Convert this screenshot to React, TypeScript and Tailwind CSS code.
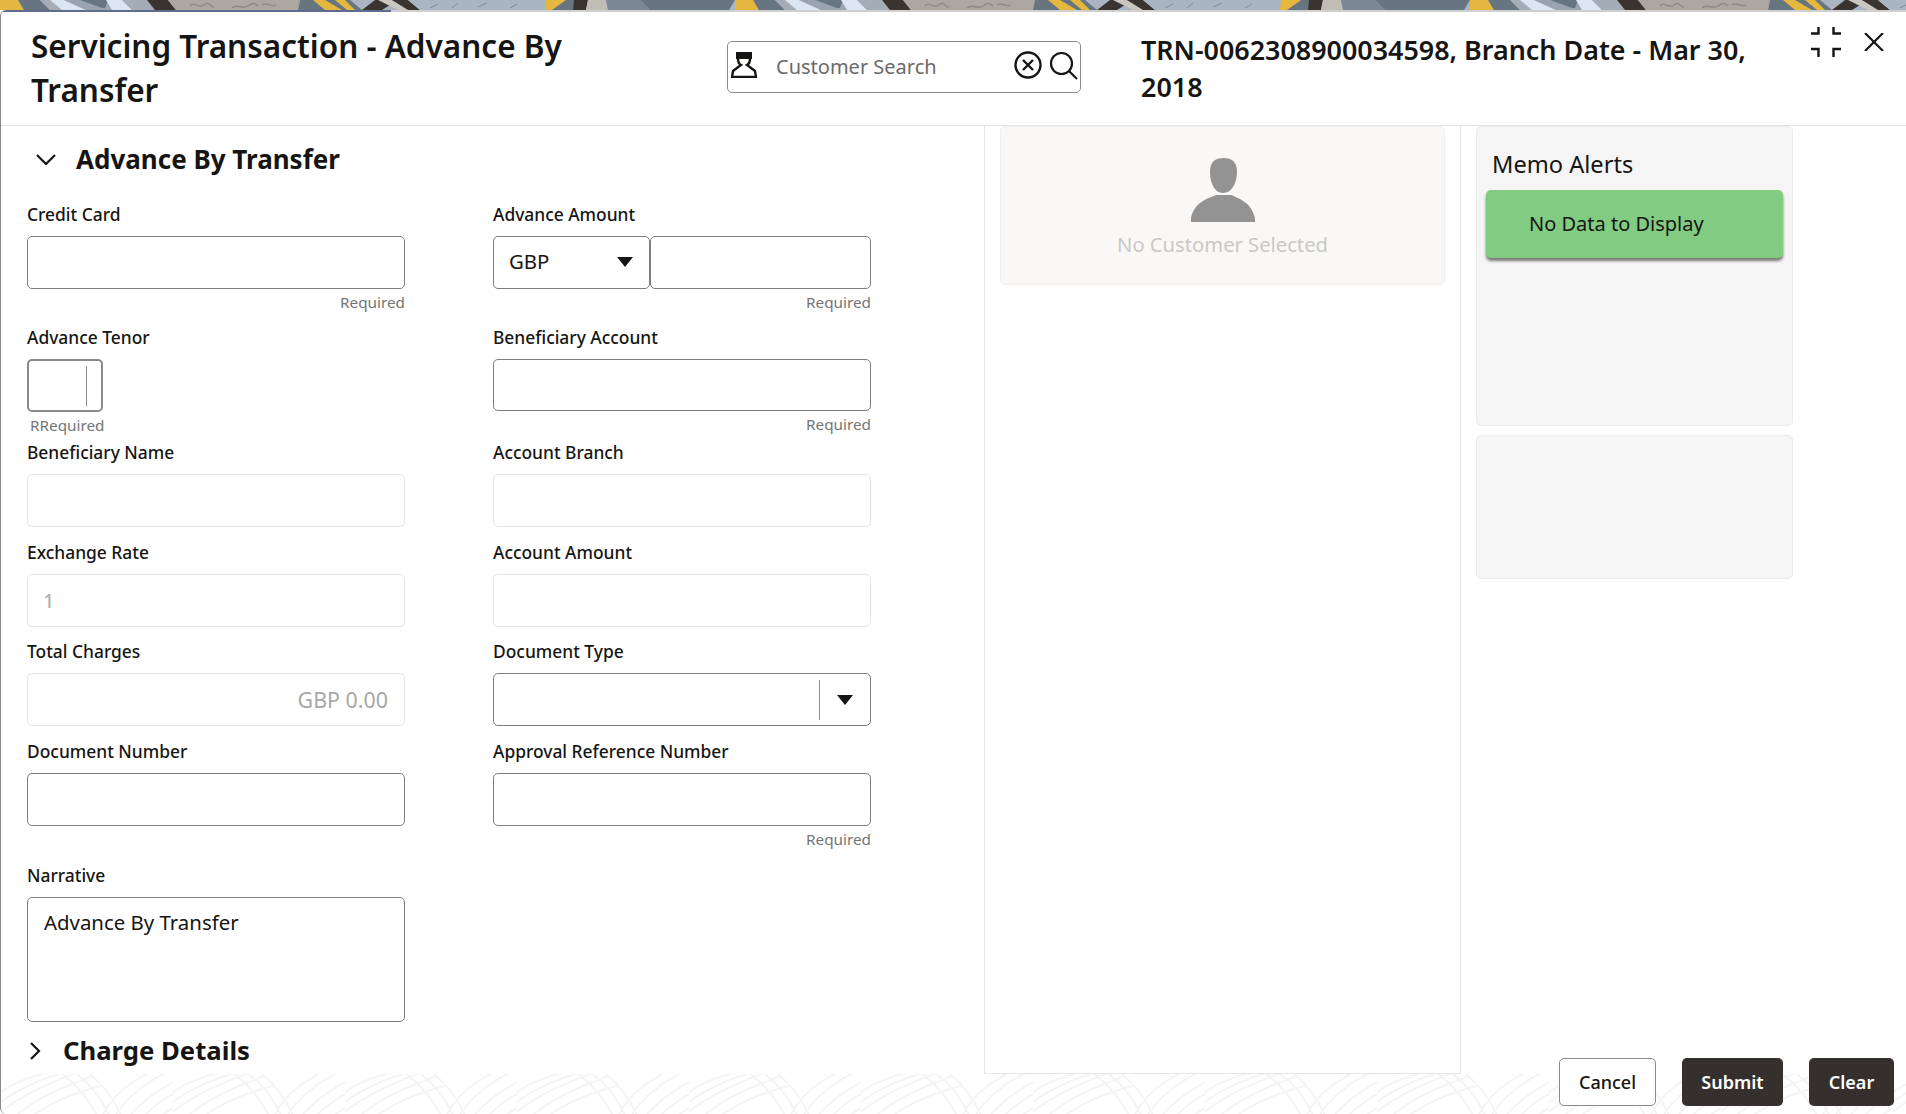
import React from 'react';

const bannerShapes: [string, string][] = [
  ['#e6b73f', '-6,0 18,0 24,10 -6,10'],
  ['#66757f', '18,0 40,0 50,10 24,10'],
  ['#a5acb5', '40,0 56,0 66,10 50,10'],
  ['#dbe6f2', '50,0 64,0 86,10 62,10'],
  ['#9ba4ae', '64,0 110,0 118,10 86,10'],
  ['#66757f', '80,0 108,0 105,8 102,8'],
  ['#dbe6f2', '106,0 122,0 132,10 112,10'],
  ['#a4acb5', '122,0 148,0 156,10 132,10'],
  ['#39342f', '147,0 168,0 176,10 155,10'],
  ['#aca7a1', '168,0 300,0 298,10 176,10'],
  ['#66757f', '300,0 350,0 362,10 298,10'],
  ['#e6b73f', '313,0 325,0 342,10 325,10'],
  ['#e6b73f', '335,0 345,0 355,10 347,10'],
  ['#39342f', '375,0 398,0 382,10 362,10'],
  ['#c9c6c0', '378,0 392,0 412,10 398,10'],
  ['#39342f', '392,0 408,0 420,10 408,10'],
  ['#a9b5c2', '408,0 556,0 545,10 420,10'],
  ['#e6b73f', '546,0 570,0 552,10 545,10'],
  ['#66757f', '566,0 576,0 573,10 552,10'],
  ['#39342f', '574,0 588,0 586,10 573,10'],
  ['#c0bdb6', '588,0 606,0 608,10 586,10'],
  ['#7b8794', '606,0 640,0 650,10 608,10'],
  ['#66757f', '640,0 735,0 729,10 650,10'],
];

const footerArcs = [
  'M-6 22C14 8 30 2 50 -2', 'M-6 32C18 14 38 6 64 -2', 'M-6 42C22 20 46 10 78 -2', 'M10 46C32 26 58 14 92 2', 'M26 46C46 30 68 20 100 12',
  'M70 -4C88 8 102 26 110 46', 'M56 -4C76 10 90 28 98 46', 'M84 -4C100 8 114 26 122 46',
  'M100 46C106 28 124 10 150 -2', 'M112 46C120 30 138 12 166 -2', 'M126 46C134 34 150 20 176 6',
  'M140 46C148 36 160 26 176 18', 'M154 46C160 42 168 36 176 32',
];

function Label({ children }: { children: React.ReactNode }) {
  return <label className="block h-6 mb-[9px] text-[17.4px] leading-[22px] font-medium text-[#161513] whitespace-nowrap">{children}</label>;
}

function Hint({ left, children }: { left?: boolean; children: React.ReactNode }) {
  return <div className={`h-5 mt-1 text-[15.3px] leading-[18px] text-[#757575] ${left ? 'pl-[3px]' : 'text-right'}`}>{children}</div>;
}

function TextInput({ disabled, value, right }: { disabled?: boolean; value?: string; right?: boolean }) {
  return (
    <input
      readOnly
      value={value ?? ''}
      className={`block w-full h-[53px] rounded-[5px] border outline-none bg-white ${right ? 'text-right text-[21.4px] px-4' : 'text-[20.4px] px-[15px] pb-[2px]'} ${disabled ? 'border-[#e4e4e4] text-[#a8a8a8]' : 'border-[#7d7d7d] text-[#161513]'}`}
    />
  );
}

function Arrow() {
  return (
    <svg width="16" height="10" viewBox="0 0 16 10" className="shrink-0">
      <path d="M0 0h16L8 10z" fill="#161513" />
    </svg>
  );
}

function Banner() {
  return (
    <svg className="block w-full h-[10px]" xmlns="http://www.w3.org/2000/svg">
      <defs>
        <pattern id="banner" width="735" height="10" patternUnits="userSpaceOnUse">
          <rect width="735" height="10" fill="#a9b5c2" />
          {bannerShapes.map(([fill, points]) => (
            <polygon key={points} fill={fill} points={points} />
          ))}
          <path d="M190 6c5-6 8 4 14-1s6 3 10 2M232 8c6-5 10 2 16-2s6-3 10 0M262 5c6-4 8 3 14 0" fill="none" stroke="#8d8985" strokeWidth="1.5" />
          <path d="M430 8l8-4M452 8l6-5M478 7l9-4M510 8l7-4" fill="none" stroke="#7f8b98" strokeWidth="1" />
        </pattern>
      </defs>
      <rect width="100%" height="10" fill="url(#banner)" />
    </svg>
  );
}

function FooterPattern() {
  return (
    <svg className="absolute inset-0 w-full h-full" xmlns="http://www.w3.org/2000/svg">
      <defs>
        <pattern id="waves" width="172" height="41" patternUnits="userSpaceOnUse">
          {footerArcs.map((d) => (
            <path key={d} d={d} fill="none" stroke="#f4f4f4" strokeWidth="2" />
          ))}
        </pattern>
      </defs>
      <rect width="100%" height="100%" fill="url(#waves)" />
    </svg>
  );
}

export default function App() {
  return (
    <div className="h-[1114px] w-full overflow-hidden bg-white font-['Noto_Sans','Open_Sans',sans-serif] text-[#161513]">
      <Banner />
      <div className="h-[1104px] flex flex-col rounded-l-[6px] border-l border-[#8a8a8a] overflow-hidden">
        <div className="flex h-[2px] shrink-0">
          <div className="w-[390px] bg-[#5f6b8f]" />
          <div className="flex-1 bg-[#cfcfcf]" />
        </div>

        {/* header */}
        <div className="flex h-[114px] shrink-0 border-b border-[#e4e4e4]">
          <div className="w-[726px] shrink-0 pl-[30px] pr-[120px] pt-[12px]">
            <h1 className="text-[31.5px] leading-[44px] font-semibold">Servicing Transaction - Advance By Transfer</h1>
          </div>
          <div className="mt-[29px] w-[354px] h-[52px] shrink-0 flex items-center rounded-[5px] border border-[#8a8a8a] pl-[3px] pr-px">
            <svg width="26" height="26" viewBox="0 0 26 26" className="shrink-0 -mt-[5px]">
              <path d="M5 0h16v7H5z" fill="#161513" />
              <path d="M7 7c0 3 1 5 3 6l-8 6-1 6h24l-1-6-8-6c2-1 3-3 3-6" fill="none" stroke="#161513" strokeWidth="2.4" />
            </svg>
            <input placeholder="Customer Search" className="flex-1 min-w-0 ml-[19px] text-[20px] outline-none bg-transparent placeholder:text-[#6a6a6a]" />
            <svg width="28" height="28" viewBox="0 0 28 28" className="shrink-0 -mt-[5px]">
              <circle cx="14" cy="14" r="12.5" fill="none" stroke="#161513" strokeWidth="2.4" />
              <path d="M9 9l10 10M19 9L9 19" stroke="#161513" strokeWidth="2.4" />
            </svg>
            <svg width="30" height="30" viewBox="0 0 30 30" className="shrink-0 ml-[7px] -mt-[2px]">
              <circle cx="12.5" cy="12.5" r="10.5" fill="none" stroke="#161513" strokeWidth="2.2" />
              <path d="M20 20l8 8" stroke="#161513" strokeWidth="2.2" />
            </svg>
          </div>
          <div className="w-[660px] shrink-0 ml-[60px] pt-[19px] text-[26.9px] leading-[37px] font-semibold">
            TRN-0062308900034598, Branch Date - Mar 30, 2018
          </div>
          <svg width="30" height="30" viewBox="0 0 30 30" className="shrink-0 ml-[10px] mt-[15px]">
            <path d="M0 6.5h7.5V0M22.5 0v6.5H30M0 22h7.5v8M30 22h-7.5v8" fill="none" stroke="#161513" strokeWidth="2.4" />
          </svg>
          <svg width="20" height="18" viewBox="0 0 20 18" className="shrink-0 ml-[23px] mt-[21px]">
            <path d="M1 0l18 18M19 0L1 18" stroke="#161513" strokeWidth="2.2" />
          </svg>
        </div>

        {/* body */}
        <div className="flex h-[948px] shrink-0">
          <div className="w-[983px] shrink-0 pl-[26px] pt-[15px]">
            <div className="flex items-center h-9 mb-[26px] pl-[9px]">
              <svg width="20" height="11" viewBox="0 0 20 11" className="shrink-0">
                <path d="M1 1l9 9 9-9" fill="none" stroke="#161513" strokeWidth="2.2" />
              </svg>
              <h2 className="ml-[20px] text-[26px] leading-9 font-bold">Advance By Transfer</h2>
            </div>

            <div className="grid grid-cols-[378px_378px] gap-x-[88px]">
              <div>
                <Label>Credit Card</Label>
                <TextInput />
                <Hint>Required</Hint>
              </div>
              <div>
                <Label>Advance Amount</Label>
                <div className="flex">
                  <div className="w-[157px] h-[53px] flex items-center justify-between pl-[15px] pr-4 pb-[2px] rounded-[5px] border border-[#7d7d7d] text-[20.4px]">
                    GBP
                    <Arrow />
                  </div>
                  <div className="flex-1 min-w-0">
                    <TextInput />
                  </div>
                </div>
                <Hint>Required</Hint>
              </div>
            </div>

            <div className="grid grid-cols-[378px_378px] gap-x-[88px] mt-[13px]">
              <div>
                <Label>Advance Tenor</Label>
                <div className="w-[76px] h-[53px] mt-px flex items-center justify-end pr-[14px] rounded-[5px] border-2 border-[#8a8a8a]">
                  <div className="w-px h-10 bg-[#8a8a8a]" />
                </div>
                <Hint left>RRequired</Hint>
              </div>
              <div>
                <Label>Beneficiary Account</Label>
                <div className="h-[52px] mt-px rounded-[5px] border border-[#7d7d7d]" />
                <Hint>Required</Hint>
              </div>
            </div>

            <div className="grid grid-cols-[378px_378px] gap-x-[88px] mt-[5px]">
              <div>
                <Label>Beneficiary Name</Label>
                <TextInput disabled />
              </div>
              <div>
                <Label>Account Branch</Label>
                <TextInput disabled />
              </div>
            </div>

            <div className="grid grid-cols-[378px_378px] gap-x-[88px] mt-[14px]">
              <div>
                <Label>Exchange Rate</Label>
                <TextInput disabled value="1" />
              </div>
              <div>
                <Label>Account Amount</Label>
                <TextInput disabled />
              </div>
            </div>

            <div className="grid grid-cols-[378px_378px] gap-x-[88px] mt-[13px]">
              <div>
                <Label>Total Charges</Label>
                <TextInput disabled value="GBP 0.00" right />
              </div>
              <div>
                <Label>Document Type</Label>
                <div className="h-[53px] flex items-center justify-end rounded-[5px] border border-[#7d7d7d]">
                  <div className="w-px h-10 bg-[#8a8a8a]" />
                  <div className="w-[50px] flex justify-center">
                    <Arrow />
                  </div>
                </div>
              </div>
            </div>

            <div className="grid grid-cols-[378px_378px] gap-x-[88px] mt-[14px]">
              <div>
                <Label>Document Number</Label>
                <TextInput />
              </div>
              <div>
                <Label>Approval Reference Number</Label>
                <TextInput />
                <Hint>Required</Hint>
              </div>
            </div>

            <div className="w-[378px] mt-[14px]">
              <Label>Narrative</Label>
              <textarea
                readOnly
                defaultValue="Advance By Transfer"
                className="block w-full h-[125px] px-4 py-[10px] rounded-[5px] border border-[#7d7d7d] text-[20.4px] leading-7 outline-none resize-none"
              />
            </div>

            <div className="flex items-center h-9 mt-[11px] pl-[3px]">
              <svg width="11" height="18" viewBox="0 0 11 18" className="shrink-0">
                <path d="M1 1l8 8-8 8" fill="none" stroke="#161513" strokeWidth="2.2" />
              </svg>
              <h2 className="ml-[22px] text-[25.7px] leading-9 font-bold">Charge Details</h2>
            </div>
          </div>

          {/* customer */}
          <div className="w-[477px] shrink-0 border-x border-b border-[#e4e4e4] pl-[15px] pr-[15px]">
            <div className="h-[159px] flex flex-col items-center pt-[31px] rounded-[5px] border border-[#f0efed] bg-[#f9f8f6]">
              <svg width="64" height="64" viewBox="0 0 64 64">
                <path d="M19 14C19 4 24 0 32.5 0S46 4 46 14C46 24 41 35 32 35S19 24 19 14Z" fill="#939393" />
                <path d="M25 37h16C44 40 60 42 64 60v4H0v-4C4 42 20 40 25 37z" fill="#939393" />
              </svg>
              <div className="mt-[8px] text-[20.2px] leading-7 text-[#c9c8c4]">No Customer Selected</div>
            </div>
          </div>

          {/* memo */}
          <div className="w-[317px] shrink-0 ml-[15px] flex flex-col gap-[9px]">
            <div className="h-[300px] rounded-[5px] border border-[#ebebeb] bg-[#f5f5f5] px-[9px]">
              <div className="pl-[6px] pt-[19px] h-[63px] text-[23.6px] leading-9">Memo Alerts</div>
              <div className="w-[297px] h-[68px] flex items-center pl-[43px] rounded-[5px] bg-[#82cb82] text-[20px] shadow-[0_3px_3px_rgba(0,0,0,0.5)]">
                No Data to Display
              </div>
            </div>
            <div className="h-[144px] rounded-[5px] border border-[#ebebeb] bg-[#f5f5f5]" />
          </div>
        </div>

        {/* footer */}
        <div className="relative flex-1 flex justify-end gap-[26px] pr-[12px]">
          <FooterPattern />
          <button className="relative -mt-[16px] h-12 w-[97px] rounded-[5px] border border-[#8a8a8a] bg-white text-[18px] font-medium">Cancel</button>
          <button className="relative -mt-[16px] h-12 w-[101px] rounded-[5px] bg-[#35302d] text-white text-[18px] font-semibold">Submit</button>
          <button className="relative -mt-[16px] h-12 w-[85px] rounded-[5px] bg-[#35302d] text-white text-[18px] font-semibold">Clear</button>
        </div>
      </div>
    </div>
  );
}
